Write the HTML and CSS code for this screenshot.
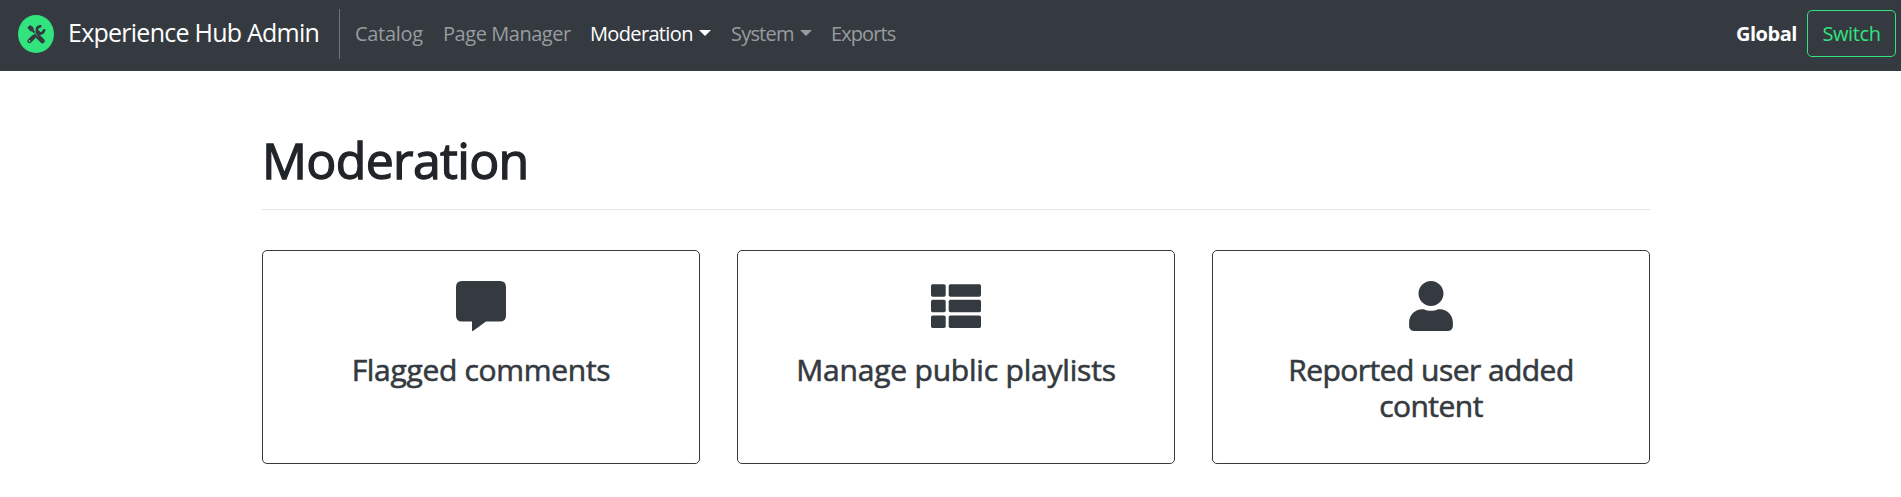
FILE: index.html
```html
<!DOCTYPE html>
<html lang="en">
<head>
<meta charset="utf-8">
<title>Experience Hub Admin</title>
<link rel="stylesheet" href="styles.css">
</head>
<body>
<header class="navbar">
  <a class="brand">
    <svg class="logo" viewBox="0 0 36 38">
      <ellipse cx="18" cy="19" rx="18" ry="19" fill="#32e47d"/>
      <g fill="none" stroke="#343a40">
        <path d="M11.500 12.500L17 18" stroke-width="2"/>
        <path d="M10 12.500L12 10.500L15 12.500L15.300 14.500L14 16L12 15.500Z" fill="#343a40" stroke-width="1"/>
        <path d="M19.500 21L24.500 26" stroke-width="4.600" stroke-linecap="round"/>
        <path d="M11.500 26L15.500 22" stroke-width="4.400" stroke-linecap="round"/>
        <path d="M15.500 22.200L21.500 16.200" stroke-width="2.400"/>
        <path d="M23.300 11.400A3.600 3.600 0 1 0 26 14.300" stroke-width="2.800"/>
        <path d="M16.400 17.500L20.500 21.600" stroke="#32e47d" stroke-width="0.600"/>
        <circle cx="11.500" cy="26" r="0.900" fill="#32e47d" stroke="none"/>
      </g>
    </svg>
    <span class="brand-name">Experience Hub Admin</span>
  </a>
  <nav class="nav">
    <a class="nav-link catalog">Catalog</a>
    <a class="nav-link pages">Page Manager</a>
    <a class="nav-link moderation active">Moderation<i class="caret"></i></a>
    <a class="nav-link system">System<i class="caret"></i></a>
    <a class="nav-link exports">Exports</a>
  </nav>
  <div class="scope">
    <strong class="scope-name">Global</strong>
    <button class="switch"><span>Switch</span></button>
  </div>
</header>
<main class="content">
  <h1 class="title"><span>Moderation</span></h1>
  <section class="cards">
    <a class="card">
      <svg class="icon" viewBox="0 0 50 50"><path d="M6 0H44Q50 0 50 6V34.500Q50 40.500 44 40.500H30L17.300 49.800Q16 50.500 16 49V40.500H6Q0 40.500 0 34.500V6Q0 0 6 0Z"/></svg>
      <h2 class="card-title flagged">Flagged comments</h2>
    </a>
    <a class="card">
      <svg class="icon" viewBox="0 0 50 50">
        <rect x="0" y="3.200" width="14.700" height="12.500" rx="1.700"/><rect x="17.700" y="3.200" width="32.300" height="12.500" rx="1.700"/>
        <rect x="0" y="18.800" width="14.700" height="12.500" rx="1.700"/><rect x="17.700" y="18.800" width="32.300" height="12.500" rx="1.700"/>
        <rect x="0" y="34.400" width="14.700" height="12.500" rx="1.700"/><rect x="17.700" y="34.400" width="32.300" height="12.500" rx="1.700"/>
      </svg>
      <h2 class="card-title playlists">Manage public playlists</h2>
    </a>
    <a class="card">
      <svg class="icon" viewBox="0 0 448 512"><path d="M224 256c70.700 0 128-57.300 128-128S294.700 0 224 0 96 57.300 96 128s57.300 128 128 128zm89.600 32h-16.700c-22.200 10.200-46.900 16-72.900 16s-50.600-5.800-72.900-16h-16.700C60.200 288 0 348.200 0 422.400V464c0 26.500 21.500 48 48 48h352c26.500 0 48-21.500 48-48v-41.600c0-74.200-60.200-134.400-134.400-134.400z"/></svg>
      <h2 class="card-title reported">Reported user added content</h2>
    </a>
  </section>
</main>
</body>
</html>
```
FILE: styles.css
```css
* { box-sizing: border-box; }

body {
  margin: 0;
  background: #fff;
  color: #212529;
  font: 20px/30px "Open Sans", "Noto Sans", sans-serif;
}

.navbar {
  display: flex;
  align-items: center;
  height: 71px;
  padding: 0 5px 4px 18px;
  background: #343a40;
}

.brand {
  display: flex;
  align-items: center;
  width: 322px;
  height: 50px;
  border-right: 1px solid #6c757d;
}

.logo { width: 36px; height: 38px; margin-right: 14px; }

.brand-name {
  color: #fff;
  font-size: 25px;
  letter-spacing: -0.75px;
  white-space: nowrap;
  padding-bottom: 3px;
}

.nav { display: flex; padding-left: 15px; }

.nav-link {
  display: flex;
  align-items: center;
  color: #999c9f;
  letter-spacing: -0.45px;
  white-space: nowrap;
}

.nav-link.active { color: #fff; }
.catalog { width: 88px; letter-spacing: -0.3px; }
.pages { width: 147px; }
.moderation { width: 141px; letter-spacing: -0.65px; }
.system { width: 100px; letter-spacing: -0.8px; }
.exports { letter-spacing: -0.9px; }

.caret {
  margin-left: 6px;
  margin-top: -2px;
  border-top: 6px solid;
  border-left: 6px solid transparent;
  border-right: 6px solid transparent;
}

.scope { display: flex; align-items: center; margin-left: auto; }

.scope-name {
  width: 71px;
  color: #fff;
  letter-spacing: -0.5px;
}

.switch {
  width: 89px;
  height: 47px;
  padding: 0;
  border: 1px solid #32e47d;
  border-radius: 5px;
  background: transparent;
  color: #32e47d;
  font: inherit;
  letter-spacing: -0.4px;
}

.content { width: 1388px; margin: 59px 0 0 262px; }

.title {
  margin: 0;
  height: 80px;
  border-bottom: 1px solid #e5e5e5;
  font-size: 50px;
  line-height: 60px;
  font-weight: 400;
  -webkit-text-stroke: 1.3px currentColor;
  letter-spacing: -0.65px;
}

.cards {
  display: grid;
  grid-template-columns: repeat(3, 438px);
  gap: 37px;
  margin-top: 40px;
}

.card {
  display: flex;
  flex-direction: column;
  align-items: center;
  height: 214px;
  padding: 30px;
  border: 1px solid #343a40;
  border-radius: 5px;
  color: #343a40;
}

.icon { width: 50px; height: 50px; fill: currentColor; }

.card-title {
  width: 330px;
  margin: 21px 0 0;
  font-size: 30px;
  line-height: 36px;
  font-weight: 400;
  -webkit-text-stroke: 0.6px currentColor;
  text-align: center;
}

.flagged { letter-spacing: -0.3px; }
.playlists { letter-spacing: -0.2px; }
.reported { letter-spacing: -0.55px; }
```
